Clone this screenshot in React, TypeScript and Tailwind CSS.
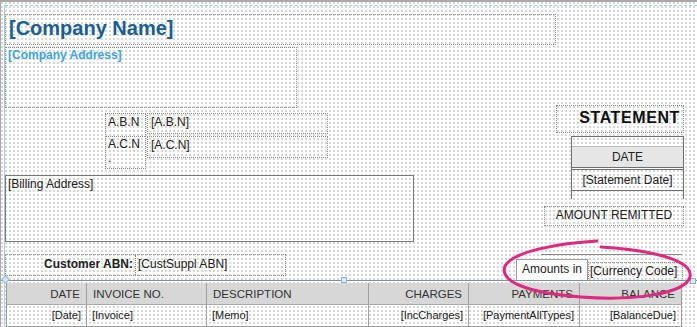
import React from "react";

const dot = "border border-dotted border-[#8c8c8c]";

const cols = [
  { head: "DATE", cell: "[Date]", w: "w-[79px]", align: "text-right" },
  { head: "INVOICE NO.", cell: "[Invoice]", w: "w-[120px]", align: "text-left" },
  { head: "DESCRIPTION", cell: "[Memo]", w: "w-[162px]", align: "text-left" },
  { head: "CHARGES", cell: "[IncCharges]", w: "w-[100px]", align: "text-right" },
  { head: "PAYMENTS", cell: "[PaymentAllTypes]", w: "w-[111px]", align: "text-right" },
  { head: "BALANCE", cell: "[BalanceDue]", w: "w-[102px]", align: "text-right" },
];

const StatementTable = () => (
  <div className="absolute left-[5px] top-[281px] w-[676px] border-l border-r border-[#9a9a9a]">
    <div className="flex h-[22px] bg-[#d7d7d7] border-b border-[#a8a8a8] text-[11.5px] text-[#333]">
      {cols.map((c, i) => (
        <div
          key={c.head}
          className={`${c.w} ${c.align} px-[6px] leading-[22px] ${i > 0 ? "border-l border-[#a0a0a0]" : ""}`}
        >
          {c.head}
        </div>
      ))}
    </div>
    <div className="flex h-[22px] text-[11px] text-[#222] border-b border-[#9a9a9a]">
      {cols.map((c, i) => (
        <div
          key={c.cell}
          className={`${c.w} ${c.align} px-[5px] leading-[20px] ${i > 0 ? "border-l border-[#a0a0a0]" : ""}`}
        >
          {c.cell}
        </div>
      ))}
    </div>
  </div>
);

const DateBox = () => (
  <div className="w-[113px] h-[63px] mt-[3px] flex flex-col border-l border-r border-[#6f6f6f] text-[12px] text-[#222]">
    <div className="h-[10px] border-t border-[#6f6f6f]" />
    <div className="h-[21px] bg-[#e6e6e6] text-center leading-[20px] border-t border-[#bdbdbd]">DATE</div>
    <div className="h-[3px] border-t border-b border-[#6f6f6f]" />
    <div className="h-[20px] text-center leading-[20px]">[Statement Date]</div>
    <div className="flex-1 border-t border-[#6f6f6f]" />
  </div>
);

export default function App() {
  return (
    <div
      className="relative w-[697px] h-[327px] overflow-hidden bg-white border-t-2 border-l border-[#a9a9a9] bg-[radial-gradient(circle_at_1px_1px,#d5d5d5_0.7px,transparent_0.8px)] bg-[length:4px_4px]"
      style={{ fontFamily: '"Liberation Sans", Arial, sans-serif' }}
    >
      {/* margin guides */}
      <div className="absolute left-[4px] right-0 top-[3px] border-t border-dashed border-[#9fd0e0]" />
      <div className="absolute left-[3px] top-[3px] bottom-0 border-l border-[#a8d0e0]" />

      {/* company header */}
      <div className="absolute left-[4px] top-[12px] flex flex-col gap-[2px]">
        <div className={`${dot} w-[551px] h-[31px]`}>
          <span className="block pl-[3px] text-[20px] font-bold leading-[26px] text-[#1a5e92]">[Company Name]</span>
        </div>
        <div className={`${dot} w-[292px] h-[61px]`}>
          <span className="block pl-[2px] text-[12px] font-bold leading-[15px] text-[#3ca6dc]">[Company Address]</span>
        </div>
      </div>

      {/* ABN / ACN */}
      <div className="absolute left-[104px] top-[111px] flex gap-[1px] text-[12px] text-[#222]">
        <div className={`${dot} w-[41px] h-[56px]`}>
          <div className="h-[23px] pl-[2px] leading-[16px] border-b border-dotted border-[#8c8c8c]">A.B.N</div>
          <div className="pl-[2px] leading-[14px]">
            A.C.N
            <br />.
          </div>
        </div>
        <div className="flex flex-col gap-[2px]">
          <div className={`${dot} w-[181px] h-[21px] pl-[3px] leading-[16px]`}>[A.B.N]</div>
          <div className={`${dot} w-[181px] h-[22px] pl-[3px] leading-[16px]`}>[A.C.N]</div>
        </div>
      </div>

      {/* billing */}
      <div className="absolute left-[4px] top-[173px] w-[409px] h-[67px] border border-[#7a7a7a] pl-[2px] text-[12px] leading-[16px] text-[#222]">
        [Billing Address]
      </div>

      {/* statement column */}
      <div className="absolute left-[540px] top-[103px] w-[143px] flex flex-col items-end text-[#222]">
        <div className={`${dot} w-[128px] h-[28px] text-right pr-[3px] text-[16px] font-bold tracking-[0.6px] leading-[24px] text-[#111]`}>
          STATEMENT
        </div>
        <DateBox />
        <div className={`${dot} w-[140px] h-[20px] mt-[7px] text-center text-[12px] leading-[17px]`}>AMOUNT REMITTED</div>
        <div className="self-start w-[141px] mt-[28px] border-t border-[#8a8a8a]" />
      </div>

      {/* customer abn */}
      <div className={`${dot} absolute left-[4px] top-[252px] w-[281px] h-[22px] flex text-[12px] text-[#222]`}>
        <span className="w-[129px] text-right pr-[2px] font-bold leading-[19px]">Customer ABN:</span>
        <span className="flex-1 border-l border-dotted border-[#8c8c8c] pl-[2px] leading-[19px]">[CustSuppl ABN]</span>
      </div>

      {/* currency */}
      <div className="absolute left-[515px] top-[257px] flex items-end text-[12px] text-[#222]">
        <div className="w-[72px] h-[22px] border border-[#9a9a9a] bg-white text-center leading-[19px]">Amounts in</div>
        <div className={`${dot} w-[95px] h-[19px] pl-[1px] leading-[16px]`}>[Currency Code]</div>
      </div>

      {/* table band */}
      <div className="absolute left-0 right-0 top-[278px] border-t border-[#7d8ea6]" />
      <StatementTable />
      <div className="absolute left-[1px] top-[274px] w-[7px] h-[7px] rounded-full bg-[#cfe7f3] border border-[#8fb6cc]" />
      <div className="absolute left-[340px] top-[275px] w-[6px] h-[6px] bg-[#dbeaf5] border border-[#8fb0c8]" />
      <div className="absolute left-[689px] top-[276px] w-[6px] h-[6px] bg-[#dbeaf5] border border-[#8fb0c8]" />

      {/* annotation */}
      <svg className="absolute left-0 top-0 pointer-events-none" width="697" height="327" viewBox="0 0 697 327">
        <path
          d="M596 239 C560 241 512 249 504 264 C498 280 528 291 580 295 C632 299 684 292 689 275 C692 260 660 249 600 245"
          fill="none"
          stroke="#e0287e"
          strokeWidth="3"
          strokeLinecap="round"
        />
      </svg>
    </div>
  );
}
